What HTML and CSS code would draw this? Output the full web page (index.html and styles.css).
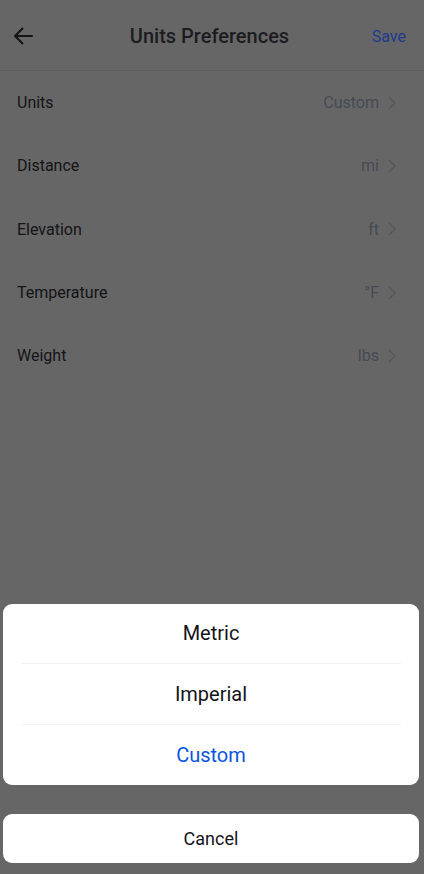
FILE: index.html
```html
<!DOCTYPE html>
<html lang="en">
<head>
    <meta charset="UTF-8">
    <meta name="viewport" content="width=device-width, initial-scale=1.0">
    <title>Units Preferences</title>
    <link rel="stylesheet" href="styles.css">
</head>
<body>
    <div class="screen">
        <header class="topbar">
            <svg class="back" width="20" height="18" viewBox="0 0 20 18">
                <path d="M19 9H2M9.5 1.5 2 9l7.5 7.5" fill="none" stroke="#141416" stroke-width="2" stroke-linecap="round" stroke-linejoin="round"/>
            </svg>
            <h1>Units Preferences</h1>
            <span class="save">Save</span>
        </header>

        <ul class="settings">
            <li><span>Units</span><span class="value">Custom<svg class="chev" width="8" height="14" viewBox="0 0 8 14"><path d="M1 1l6 6-6 6" /></svg></span></li>
            <li><span>Distance</span><span class="value">mi<svg class="chev" width="8" height="14" viewBox="0 0 8 14"><path d="M1 1l6 6-6 6" /></svg></span></li>
            <li><span>Elevation</span><span class="value">ft<svg class="chev" width="8" height="14" viewBox="0 0 8 14"><path d="M1 1l6 6-6 6" /></svg></span></li>
            <li><span>Temperature</span><span class="value">°F<svg class="chev" width="8" height="14" viewBox="0 0 8 14"><path d="M1 1l6 6-6 6" /></svg></span></li>
            <li><span>Weight</span><span class="value">lbs<svg class="chev" width="8" height="14" viewBox="0 0 8 14"><path d="M1 1l6 6-6 6" /></svg></span></li>
        </ul>

        <div class="sheet">
            <div class="card options">
                <button>Metric</button>
                <button>Imperial</button>
                <button class="active">Custom</button>
            </div>
            <div class="card">
                <button>Cancel</button>
            </div>
        </div>
    </div>
</body>
</html>
```

FILE: styles.css
```css
body {
    margin: 0;
    font-family: Roboto, "Noto Sans", sans-serif;
    background-color: #666666;
}

.screen {
    position: relative;
    width: 424px;
    height: 874px;
    background-color: #666666;
    overflow: hidden;
}

.topbar {
    height: 71px;
    box-sizing: border-box;
    padding: 2px 18px 0 13px;
    display: grid;
    grid-template-columns: 1fr auto 1fr;
    align-items: center;
    border-bottom: 1px solid #5f5f60;
}

.topbar h1 {
    margin: 0;
    font-size: 20px;
    font-weight: 500;
    color: #1c1c20;
}

.save {
    justify-self: end;
    font-size: 16px;
    color: #1e3a8c;
}

.back {
    display: block;
}

.settings {
    list-style: none;
    margin: 0;
    padding: 0;
}

.settings li {
    height: 63.3px;
    display: flex;
    align-items: center;
    justify-content: space-between;
    padding: 0 28px 0 17px;
    font-size: 16px;
    color: #141416;
}

.value {
    display: flex;
    align-items: center;
    color: #474a53;
}

.chev {
    margin-left: 9px;
    fill: none;
    stroke: #55575c;
    stroke-width: 1.4;
}

.sheet {
    position: absolute;
    left: 3px;
    right: 5px;
    bottom: 11px;
    display: flex;
    flex-direction: column;
    gap: 29px;
}

.card {
    background-color: #fff;
    border-radius: 9px;
    overflow: hidden;
}

.card button {
    display: block;
    width: 100%;
    height: 49px;
    border: none;
    background: none;
    font-family: inherit;
    font-size: 18px;
    color: #14141a;
}

.options {
    padding: 0 18px;
}

.options button {
    height: 60.5px;
    font-size: 20px;
    border-bottom: 1px solid #f2f2f4;
}

.options button:last-child {
    border-bottom: none;
}

.options .active {
    color: #0a55e0;
}
```
